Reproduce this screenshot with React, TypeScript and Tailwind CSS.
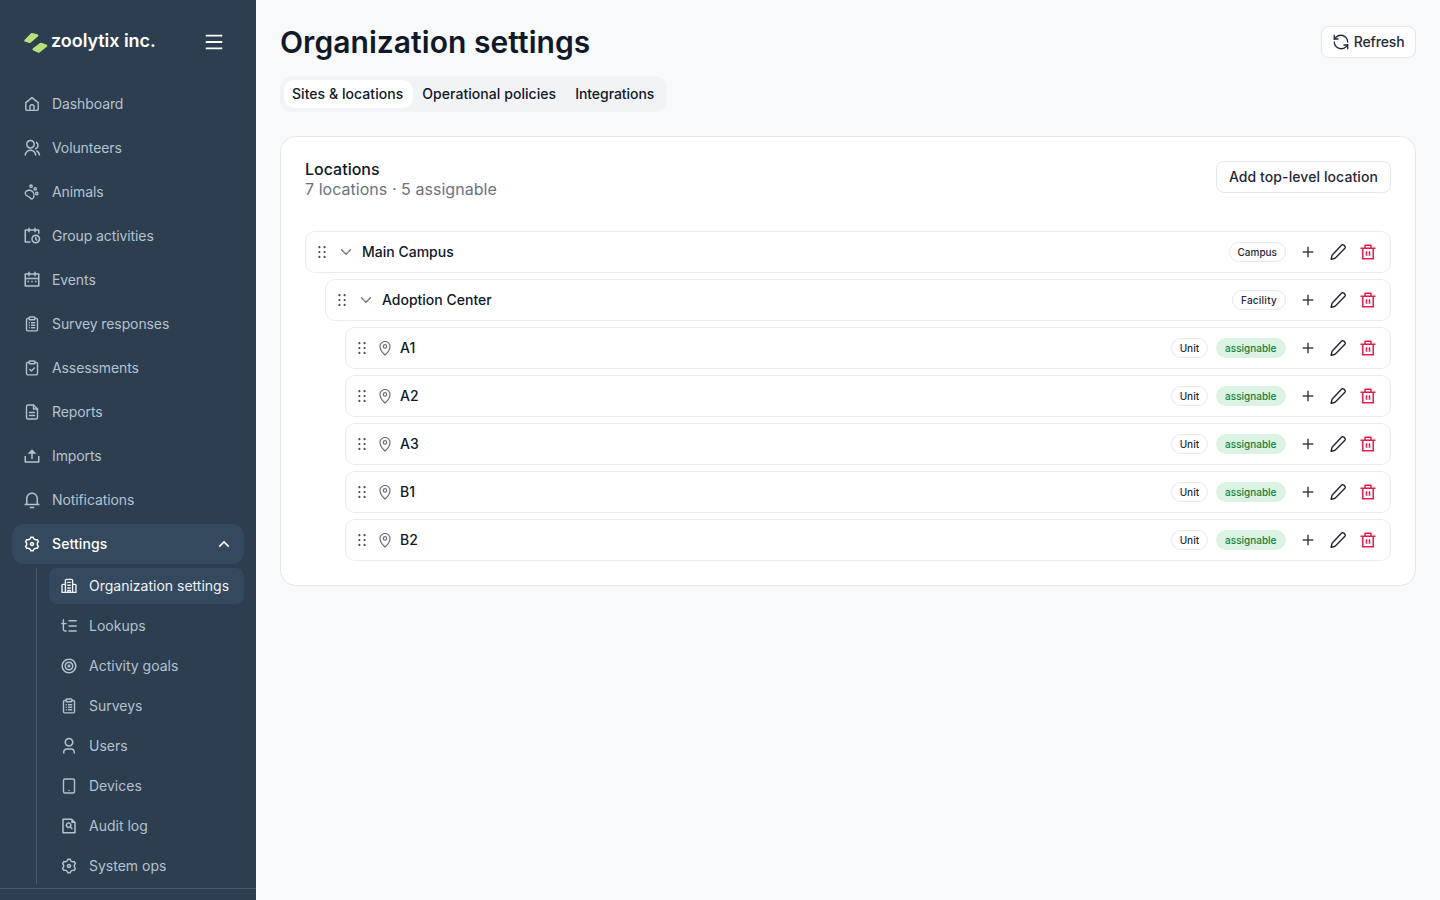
import React from "react";
import {
  RiGroupLine, RiCalendarScheduleLine, RiCalendar2Line, RiUpload2Line,
  RiNotification3Line, RiSettings3Line, RiArrowUpSLine, RiFocus2Line, RiUser3Line,
  RiFileSearchLine, RiDraggable, RiAddLine, RiDeleteBinLine, RiMenuLine,
} from "react-icons/ri";
import { ChevronDown, RefreshCcw } from "lucide-react";

type IconProps = { size?: number; className?: string };

function Svg({ size = 18, children }: IconProps & { children: React.ReactNode }) {
  return (
    <svg width={size} height={size} viewBox="0 0 18 18" fill="none" stroke="currentColor" strokeWidth="1.4" strokeLinecap="round" strokeLinejoin="round" className="flex-none">
      {children}
    </svg>
  );
}
const HomeDoor = ({ size }: IconProps) => (
  <Svg size={size}>
    <path d="M2.800 7.600 9 2.600l6.200 5v6.600a1.200 1.200 0 0 1-1.200 1.200H4a1.200 1.200 0 0 1-1.200-1.200z" />
    <path d="M7 15.400v-3.600a2 2 0 0 1 4 0v3.600" />
  </Svg>
);
const Paw = ({ size }: IconProps) => (
  <Svg size={size}>
    <path d="M3 8.500C4.500 7 7.500 6.800 9.500 8.600 11 10 11.400 13 10.300 15 9.500 16.300 8 16.200 7.200 15 6.600 14 5.700 13.600 4.500 13.200 2.300 12.500 1.700 9.900 3 8.500z" />
    <circle cx="8" cy="3.200" r="1.200" />
    <circle cx="12.200" cy="5.800" r="1.200" />
    <circle cx="13.800" cy="10.500" r="1.200" />
  </Svg>
);
const ClipBase = () => (
  <>
    <path d="M6 3.400H4.800a1.300 1.300 0 0 0-1.300 1.300v9.900a1.300 1.300 0 0 0 1.300 1.300h8.400a1.300 1.300 0 0 0 1.300-1.300V4.700a1.300 1.300 0 0 0-1.300-1.300H12" />
    <rect x="6" y="2" width="6" height="2.700" rx=".8" />
  </>
);
const ClipCheck = ({ size }: IconProps) => (
  <Svg size={size}>
    <ClipBase />
    <path d="m6.800 10.400 1.600 1.600 2.900-3" />
  </Svg>
);
const ClipList = ({ size }: IconProps) => (
  <Svg size={size}>
    <ClipBase />
    <path d="M6.300 7.800h.01M8.500 7.800h3.200M6.300 10.300h.01M8.500 10.300h3.200M6.300 12.800h.01M8.500 12.800h3.200" />
  </Svg>
);
const Doc = ({ size }: IconProps) => (
  <Svg size={size}>
    <path d="M10.500 2H5a1.500 1.500 0 0 0-1.500 1.500v11A1.500 1.500 0 0 0 5 16h8a1.500 1.500 0 0 0 1.500-1.500V6z" />
    <path d="M10.500 2v4h4M6.500 9.500h5M6.500 12.500h5" />
  </Svg>
);
const Tablet = ({ size }: IconProps) => (
  <Svg size={size}>
    <rect x="3.500" y="2" width="11" height="14" rx="1.500" />
    <path d="M9 13.500h.01" />
  </Svg>
);
const Org = ({ size }: IconProps) => (
  <Svg size={size}>
    <path d="M5.400 15.400V3.400a1 1 0 0 1 1-1h5.200a1 1 0 0 1 1 1v12" />
    <path d="M5.400 7.400H2.900a.900.900 0 0 0-.9.900v7.100h14V8.300a.900.900 0 0 0-.9-.9h-2.500" />
    <path d="M7.800 5.400h2.400M7.800 8.200h2.400M7.800 11h2.400M7.800 15.400v-2h2.400v2" />
  </Svg>
);
const Lookup = ({ size }: IconProps) => (
  <Svg size={size}>
    <path d="M3.400 2.800v9.700a1.500 1.500 0 0 0 1.500 1.500h1.200M1.600 6.600h4.500" />
    <path d="M9 3.800h7.200M9 9h7.200M9 14h7.200" />
  </Svg>
);
const Pencil = ({ size }: IconProps) => (
  <Svg size={size}>
    <path d="M12.400 2.300a1.900 1.900 0 0 1 2.700 0l.6.600a1.900 1.900 0 0 1 0 2.700L6.100 15.200l-4 1 1-4z" />
  </Svg>
);
const Pin = ({ size }: IconProps) => (
  <Svg size={size}>
    <path d="M9 16C6.500 13.700 4 11 4 7.400a5 5 0 0 1 10 0C14 11 11.500 13.700 9 16z" strokeWidth="1.200" />
    <circle cx="9" cy="7.400" r="1.700" strokeWidth="1.200" />
  </Svg>
);

const top: [string, React.ComponentType<IconProps>][] = [
  ["Dashboard", HomeDoor], ["Volunteers", RiGroupLine], ["Animals", Paw], ["Group activities", RiCalendarScheduleLine],
  ["Events", RiCalendar2Line], ["Survey responses", ClipList], ["Assessments", ClipCheck],
  ["Reports", Doc], ["Imports", RiUpload2Line], ["Notifications", RiNotification3Line],
];
const sub: [string, React.ComponentType<IconProps>][] = [
  ["Lookups", Lookup], ["Activity goals", RiFocus2Line], ["Surveys", ClipList], ["Users", RiUser3Line],
  ["Devices", Tablet], ["Audit log", RiFileSearchLine], ["System ops", RiSettings3Line],
];

function Row({ name, level, kind, kindClass, folder }: { name: string; level: string; kind: string; kindClass: string; folder?: boolean }) {
  return (
    <div className={`flex h-[42px] items-center gap-2 rounded-[10px] border border-[#e9ecef] bg-white px-2 ${level}`}>
      <span className="flex w-4 justify-center text-[#4b5563]"><RiDraggable size={18} className="flex-none" /></span>
      {folder ? (
        <span className="flex w-4 justify-center text-[#6b7280]"><ChevronDown size={18} strokeWidth={1.6} className="flex-none" /></span>
      ) : (
        <span className="flex w-[14px] justify-center text-[#6b7280]"><Pin size={18} /></span>
      )}
      <span className="flex-1 text-sm font-medium text-[#111827]">{name}</span>
      <span className={`flex h-5 items-center rounded-full border border-[#e5e7eb] bg-white text-[10px] font-medium text-[#1f2937] ${kindClass}`}>{kind}</span>
      {!folder && (
        <span className="flex h-5 items-center rounded-full bg-[#dcf3e3] px-[9.5px] text-[10px] font-medium text-[#15803d]">assignable</span>
      )}
      <div className="flex gap-[2px]">
        <span className="flex h-7 w-7 items-center justify-center text-[#374151]"><RiAddLine size={18} /></span>
        <span className="flex h-7 w-7 items-center justify-center text-[#1f2937]"><Pencil size={18} /></span>
        <span className="flex h-7 w-7 items-center justify-center text-[#e11d48]"><RiDeleteBinLine size={18} /></span>
      </div>
    </div>
  );
}

export default function App() {
  return (
    <div className="flex h-screen w-full overflow-hidden bg-[#f8f9fb] font-['Inter',sans-serif]">
      <aside className="flex h-full w-64 flex-none flex-col bg-[#2c3e50]">
        <div className="flex h-[84px] flex-none items-center justify-between pl-6 pr-[31px]">
          <div className="flex items-center gap-[3px]">
            <svg width="24" height="21" viewBox="0 0 24 21" fill="#b5e07a" stroke="#b5e07a" strokeWidth="2.600" strokeLinejoin="round">
              <path d="M7.900 2.200 13 3.600 5.800 9.800 1.600 8.600z" />
              <path d="M16.800 12 22 13.800 14.800 19.500 9.800 17.400z" />
            </svg>
            <span className="-mt-[2px] text-lg font-semibold tracking-[-0.05px] text-white">zoolytix inc.</span>
          </div>
          <RiMenuLine size={22} className="text-white" />
        </div>
        <nav className="flex min-h-0 flex-1 flex-col gap-1 overflow-hidden px-3">
          {top.map(([label, Icon]) => (
            <div key={label} className="flex h-10 flex-none items-center gap-[11px] pl-[11px] pr-3 text-sm tracking-[-0.1px] text-[#b4c2cf]">
              <Icon size={18} />
              <span>{label}</span>
            </div>
          ))}
          <div className="flex h-10 flex-none items-center gap-[11px] rounded-xl bg-[#34495e] pl-[11px] pr-[10px] text-sm font-medium tracking-[0.1px] text-white">
            <RiSettings3Line size={18} />
            <span className="flex-1">Settings</span>
            <RiArrowUpSLine size={20} />
          </div>
          <div className="ml-6 flex flex-col gap-1 border-l border-[#4a5a6a] pl-3">
            <div className="flex h-9 flex-none items-center gap-[11px] rounded-lg bg-[#34495e] pl-[11px] pr-3 text-sm text-[#eef2f6]">
              <Org size={18} />
              <span>Organization settings</span>
            </div>
            {sub.map(([label, Icon]) => (
              <div key={label} className="flex h-9 flex-none items-center gap-[11px] pl-[11px] pr-3 text-sm text-[#b4c2cf]">
                <Icon size={18} />
                <span>{label}</span>
              </div>
            ))}
          </div>
        </nav>
        <div className="h-3 flex-none border-t border-[#4a5a6a]" />
      </aside>
      <main className="min-w-0 flex-1 p-6">
        <div className="flex items-center justify-between">
          <h1 className="text-3xl font-semibold tracking-[0.05px] text-[#111827]">Organization settings</h1>
          <button className="flex h-8 items-center gap-1 rounded-lg border border-[#e5e7eb] bg-white pl-[9.5px] pr-[10.5px] text-sm font-medium tracking-[-0.15px] text-[#1f2937]">
            <RefreshCcw size={18} strokeWidth={1.7} />
            Refresh
          </button>
        </div>
        <div className="mt-4 inline-flex h-9 items-center rounded-xl bg-[#f1f3f6] p-1 text-sm font-medium tracking-[0.05px] text-[#111827]">
          <span className="flex h-7 items-center rounded-[10px] bg-white pl-2 pr-[10px]">Sites &amp; locations</span>
          <span className="flex h-7 items-center px-[9px]">Operational policies</span>
          <span className="flex h-7 items-center pl-[10px] pr-[9px] tracking-[-0.05px]">Integrations</span>
        </div>
        <section className="mt-6 rounded-2xl border border-[#e5e7eb] bg-white p-6">
          <div className="flex items-start justify-between">
            <div>
              <h2 className="text-base font-medium leading-4 text-[#111827]">Locations</h2>
              <p className="mt-[2px] text-base leading-5 tracking-[0.04px] text-[#6b7280]">7 locations · 5 assignable</p>
            </div>
            <button className="flex h-8 items-center rounded-lg border border-[#e5e7eb] bg-white px-3 text-sm font-medium tracking-[0.09px] text-[#1f2937]">
              Add top-level location
            </button>
          </div>
          <div className="mt-8 flex flex-col gap-[6px]">
            <Row name="Main Campus" level="" kind="Campus" kindClass="px-2" folder />
            <Row name="Adoption Center" level="ml-5" kind="Facility" kindClass="px-2 tracking-[0.25px]" folder />
            <Row name="A1" level="ml-10" kind="Unit" kindClass="px-[7.5px]" />
            <Row name="A2" level="ml-10" kind="Unit" kindClass="px-[7.5px]" />
            <Row name="A3" level="ml-10" kind="Unit" kindClass="px-[7.5px]" />
            <Row name="B1" level="ml-10" kind="Unit" kindClass="px-[7.5px]" />
            <Row name="B2" level="ml-10" kind="Unit" kindClass="px-[7.5px]" />
          </div>
        </section>
      </main>
    </div>
  );
}
